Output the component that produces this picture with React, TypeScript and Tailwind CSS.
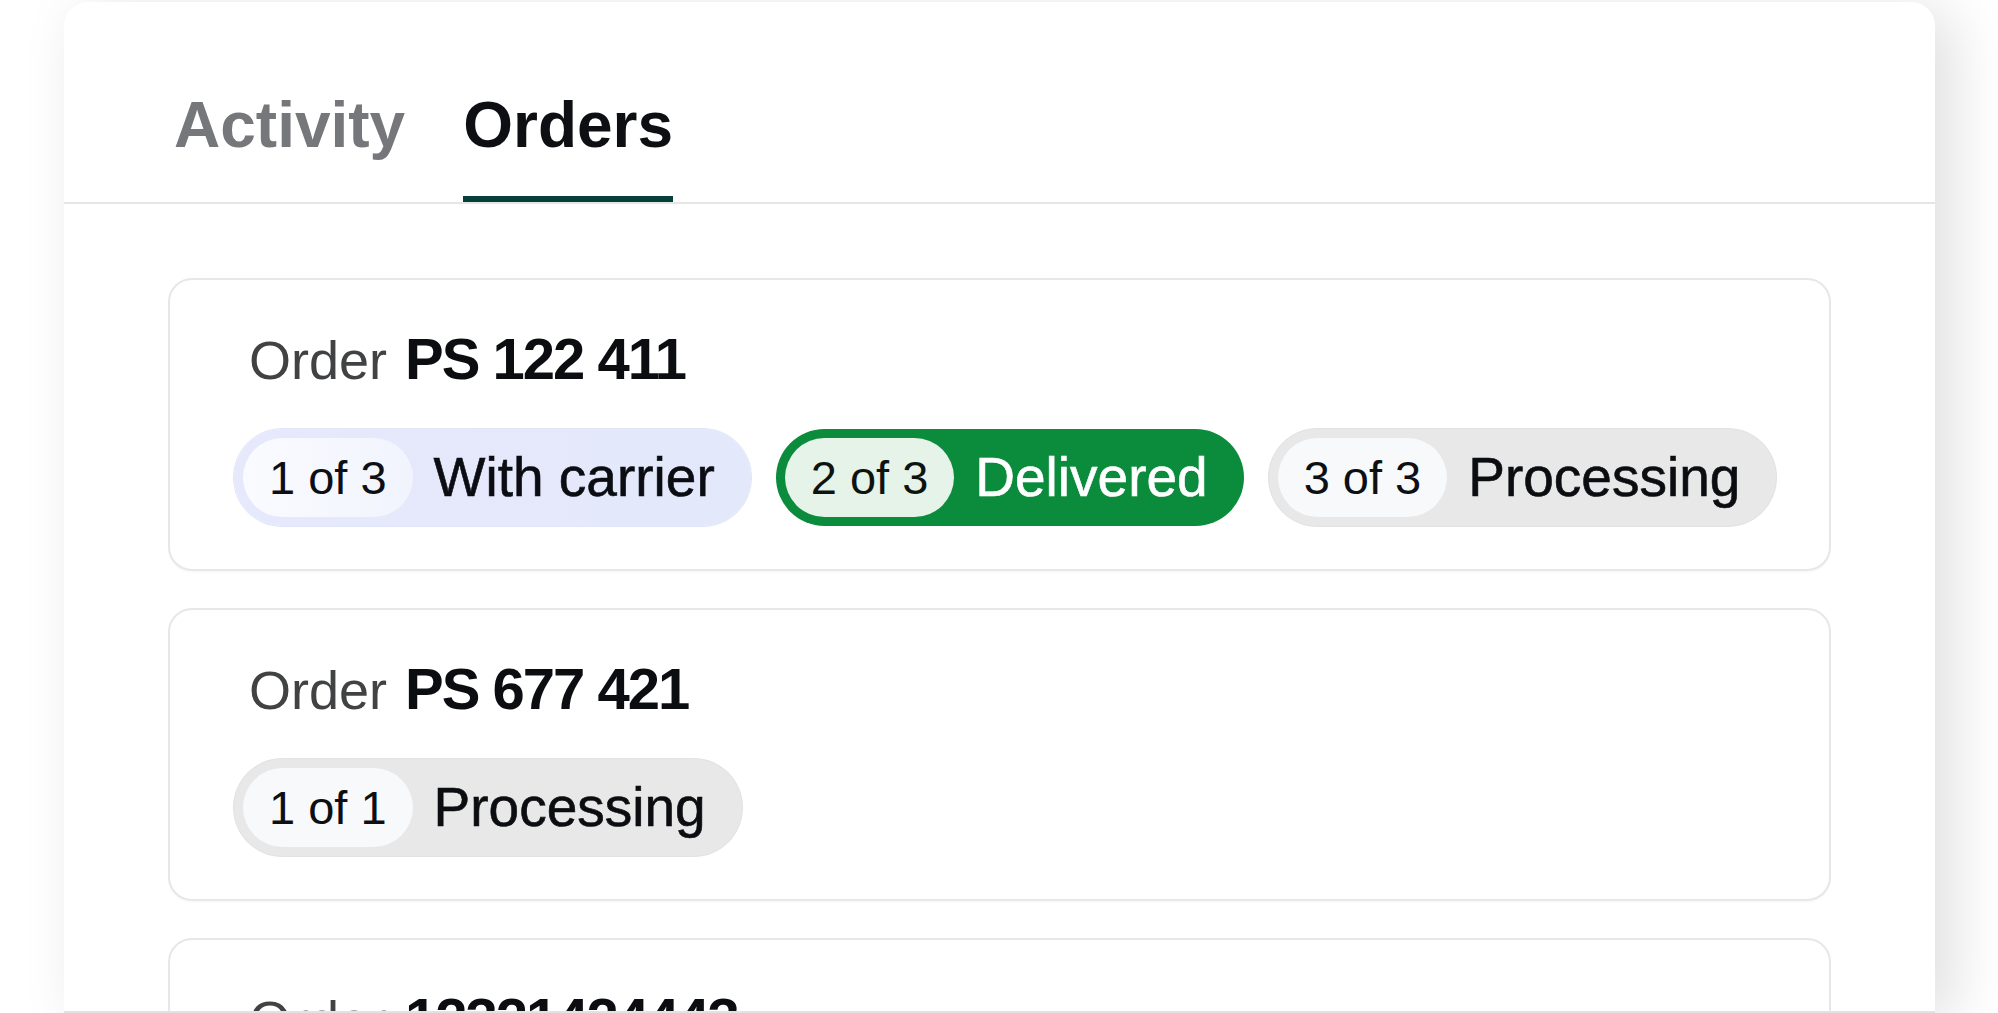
import React from "react";

type Variant = "carrier" | "delivered" | "processing";

interface Shipment {
  step: string;
  label: string;
  variant: Variant;
}

interface Order {
  id: string;
  shipments: Shipment[];
}

const orders: Order[] = [
  {
    id: "PS 122 411",
    shipments: [
      { step: "1 of 3", label: "With carrier", variant: "carrier" },
      { step: "2 of 3", label: "Delivered", variant: "delivered" },
      { step: "3 of 3", label: "Processing", variant: "processing" },
    ],
  },
  {
    id: "PS 677 421",
    shipments: [{ step: "1 of 1", label: "Processing", variant: "processing" }],
  },
  {
    id: "12321424443",
    shipments: [{ step: "1 of 1", label: "Processing", variant: "processing" }],
  },
];

// full class strings per status so tailwind picks them up
const pillStyles: Record<Variant, { outer: string; chip: string; label: string }> = {
  carrier: {
    outer: "bg-gradient-to-r from-[#e6e9fb] to-[#e3e8fa] ring-1 ring-[#e1e5f7]",
    chip: "bg-gradient-to-r from-[#fafbff] to-[#f1f4fd] text-[#0d0f14]",
    label: "text-[#0b0d12]",
  },
  delivered: {
    outer: "bg-[#0b8b3c]",
    chip: "bg-[#e5f3e9] text-[#0d1410]",
    label: "text-white",
  },
  processing: {
    outer: "bg-[#e8e8e9] ring-1 ring-[#e2e2e3]",
    chip: "bg-[#f7f9fb] text-[#0d0f12]",
    label: "text-[#0b0d10]",
  },
};

function StatusPill({ step, label, variant }: Shipment) {
  const s = pillStyles[variant];
  return (
    <div
      className={`flex h-[97px] shrink-0 items-center whitespace-nowrap rounded-full pl-[9px] pr-[36px] ${s.outer}`}
    >
      <div
        className={`flex h-[79px] items-center rounded-full px-[26px] text-[47px] leading-none ${s.chip}`}
      >
        {step}
      </div>
      <span
        className={`ml-[21px] text-[55px] leading-none [-webkit-text-stroke:0.6px_currentColor] ${s.label}`}
      >
        {label}
      </span>
    </div>
  );
}

function OrderCard({ order }: { order: Order }) {
  return (
    <div className="rounded-[24px] border-2 border-[#e7e7e7] bg-white pt-[50px] pb-[43px] pl-[64px] pr-[64px] shadow-[0_2px_0_rgba(0,0,0,0.02)]">
      {/* Title */}
      <div className="flex h-[58px] items-baseline whitespace-nowrap pl-[15px] leading-none">
        <span className="text-[54px] text-[#414243]">Order</span>
        <span className="ml-[18px] text-[58px] font-bold tracking-[-2px] text-[#0b0d10]">
          {order.id}
        </span>
      </div>

      {/* Shipments */}
      <div className="mt-[41px] flex gap-[25px]">
        {order.shipments.map((s) => (
          <StatusPill key={s.step + s.label} {...s} />
        ))}
      </div>
    </div>
  );
}

export default function App() {
  return (
    <div className="h-[1013px] w-full overflow-hidden bg-white font-['Liberation_Sans',Arial,sans-serif]">
      <div className="ml-[64px] mt-[2px] flex h-[1011px] w-[1871px] flex-col overflow-hidden rounded-t-[24px] border-b-2 border-[#e2e2e2] bg-white shadow-[18px_8px_60px_rgba(0,0,0,0.13)]">
        {/* Tabs */}
        <div className="flex gap-[54px] border-b-2 border-[#e6e6e6] pl-[108px] pt-[91px]">
          <button className="flex flex-col items-stretch px-[2px]">
            <span className="text-[64px] font-bold leading-none text-[#76777a]">Activity</span>
            <span className="mt-[39px] h-[6px]" />
          </button>
          <button className="flex flex-col items-stretch px-[2px]">
            <span className="text-[64px] font-bold leading-none text-[#0d0f12]">Orders</span>
            <span className="mt-[39px] h-[6px] bg-[#073f3a]" />
          </button>
        </div>

        {/* Order list */}
        <div className="flex flex-col gap-[37px] px-[104px] pt-[74px]">
          {orders.map((o) => (
            <OrderCard key={o.id} order={o} />
          ))}
        </div>
      </div>
    </div>
  );
}
